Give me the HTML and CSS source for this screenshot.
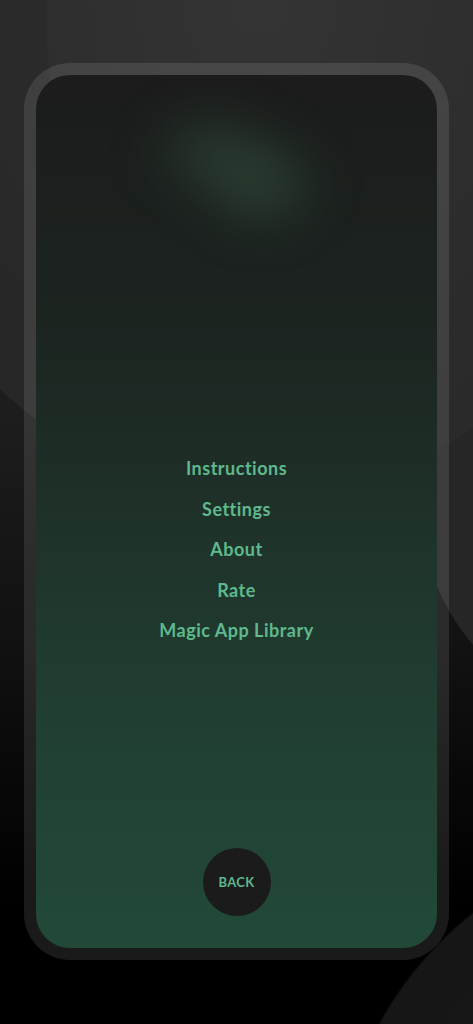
FILE: index.html
```html
<!DOCTYPE html>
<html lang="en">
<head>
    <meta charset="UTF-8">
    <meta name="viewport" content="width=device-width, initial-scale=1.0">
    <title>Menu</title>
    <link rel="stylesheet" href="styles.css">
</head>
<body>
    <div class="phone">
        <div class="screen">
            <div class="glow"></div>
            <nav class="menu">
                <a href="#">Instructions</a>
                <a href="#">Settings</a>
                <a href="#">About</a>
                <a href="#">Rate</a>
                <a href="#">Magic App Library</a>
            </nav>
            <button class="back" type="button">BACK</button>
        </div>
    </div>
</body>
</html>
```

FILE: styles.css
```css
body {
    margin: 0;
    width: 473px;
    height: 1024px;
    overflow: hidden;
    font-family: 'Lato', 'Noto Sans', sans-serif;
    /* backdrop: dark base with a few lighter curved sheets */
    background:
        radial-gradient(circle 900px at 945px 0px, transparent 99.7%, rgba(0, 0, 0, 0.08) 100%),
        radial-gradient(ellipse 417px 499px at 260px 0px, #343434 0, #2b2b2b 80%, #2a2a2a 99.6%, transparent 100%),
        radial-gradient(ellipse 150px 240px at 560px 450px, #262626 0, #262626 99.4%, transparent 100%),
        radial-gradient(circle 367px at 700px 1200px, #1b1b1b 0, #181818 99.4%, transparent 100%),
        linear-gradient(180deg, #2f2f2f 0, #1f1f1f 420px, #121212 650px, #000 900px);
}
.phone {
    margin: 63px 24px 0;
    padding: 12px;
    border-radius: 46px;
    background-color: rgba(255, 255, 255, 0.1);
}
.screen {
    height: 873px;
    border-radius: 34px;
    overflow: hidden;
    display: flex;
    flex-direction: column;
    align-items: center;
    background: linear-gradient(180deg, #1b1c1b 0%, #1c2420 28%, #1f342b 55%, #214233 80%, #224938 100%);
}
.glow {
    width: 190px;
    height: 130px;
    margin-top: 30px;
    filter: blur(20px);
    background:
        radial-gradient(ellipse 38% 40% at 36% 36%, rgba(52, 80, 64, 0.55), transparent 100%),
        radial-gradient(ellipse 38% 45% at 62% 60%, rgba(55, 88, 68, 0.6), transparent 100%);
}
.menu {
    margin-top: 213px;
    display: flex;
    flex-direction: column;
    align-items: center;
}
.menu a {
    color: #5eb98d;
    text-decoration: none;
    font-size: 18px;
    font-weight: 700;
    letter-spacing: 0.5px;
    line-height: 40.5px;
}
.back {
    margin-top: auto;
    margin-bottom: 32px;
    width: 68px;
    height: 68px;
    border: none;
    border-radius: 50%;
    background-color: #1b1b1b;
    color: #5eb98d;
    font-family: 'Lato', sans-serif;
    font-size: 13px;
    font-weight: 700;
    letter-spacing: 0.3px;
    padding: 0;
    cursor: pointer;
}
```
